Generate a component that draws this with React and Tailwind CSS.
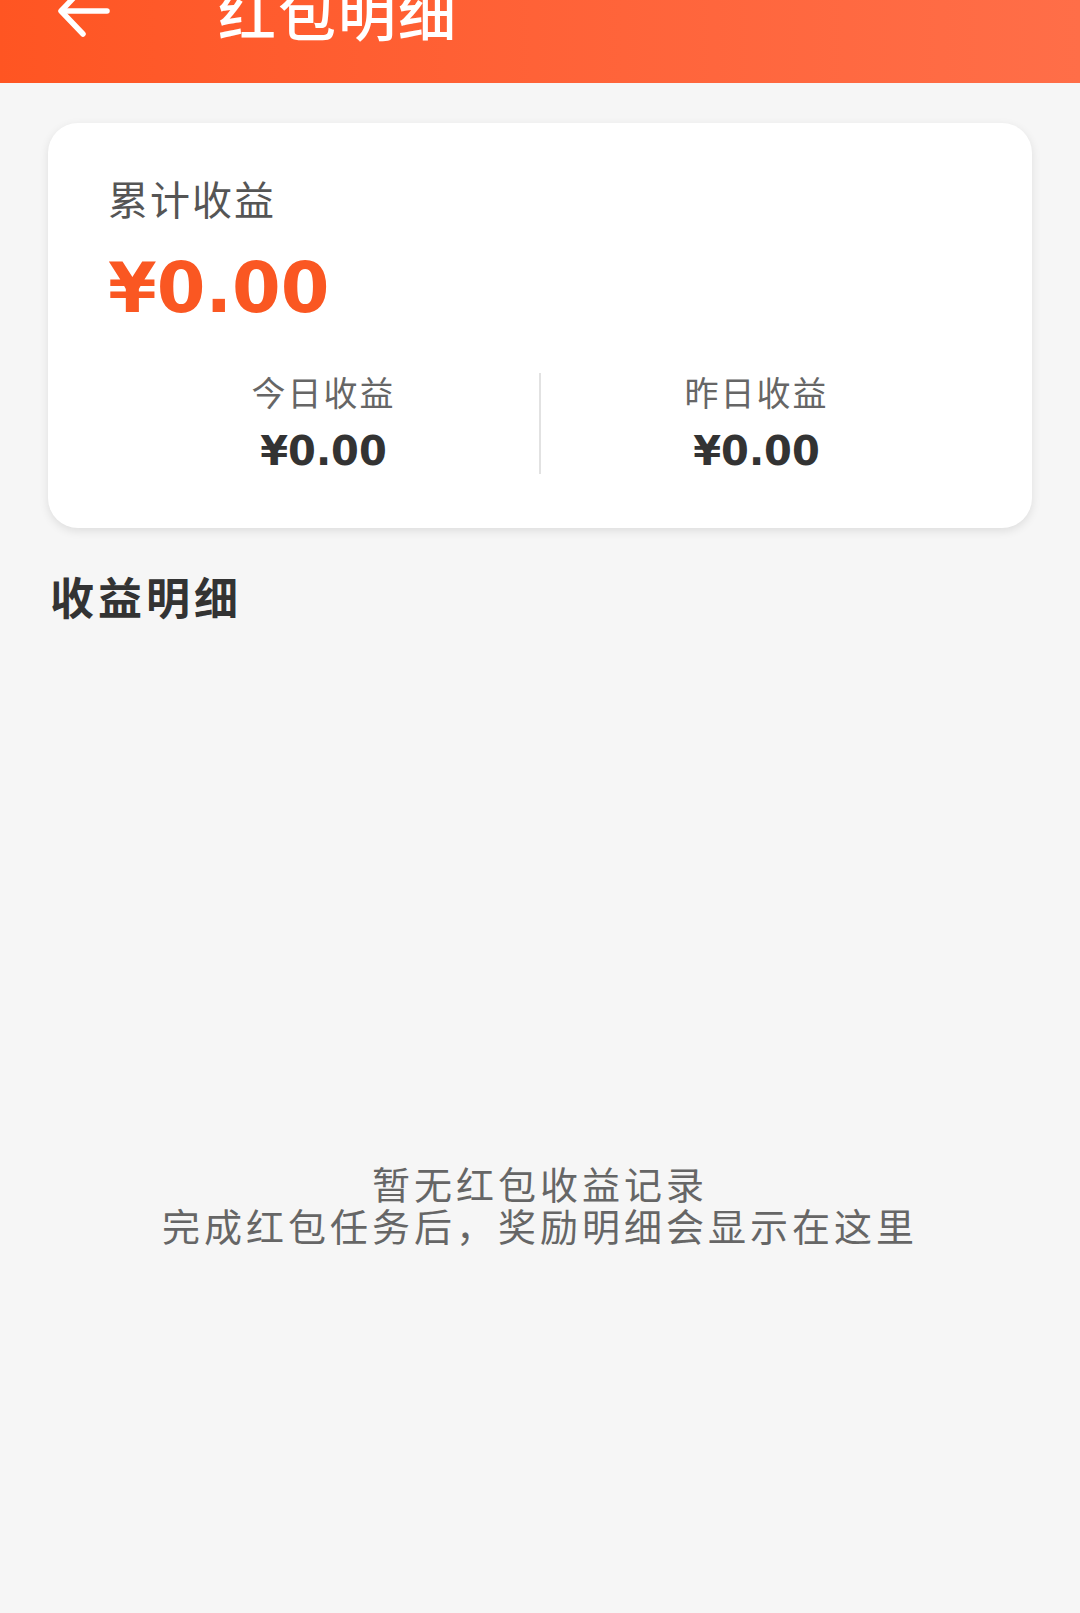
const cjk = { fontFamily: '"Noto Sans CJK SC", "Noto Sans", sans-serif' };
const num = { fontFamily: '"DejaVu Sans", "Liberation Sans", sans-serif' };

const Stat = ({ label, value }) => (
  <div className="flex-1 flex flex-col items-center">
    <div style={cjk} className="text-[34px] leading-[40px] tracking-[2px] text-[#666]">
      {label}
    </div>
    <div style={num} className="mt-[15px] text-[40px] leading-[48px] font-bold text-[#333]">
      {value}
    </div>
  </div>
);

const App = () => {
  return (
    <div className="w-[1080px] min-h-[1613px] bg-[#f6f6f6]">
      {/* header */}
      <div className="h-[83px] overflow-hidden bg-gradient-to-r from-[#ff5522] to-[#ff6e48]">
        <div className="relative -mt-[19px] h-[60px] flex items-center">
          <svg
            className="ml-[56px]"
            width="56"
            height="56"
            viewBox="0 0 56 56"
            fill="none"
            stroke="#fff"
            strokeWidth="5.5"
            strokeLinecap="round"
            strokeLinejoin="round"
          >
            <path d="M27 5 L5 28 L27 51" />
            <path d="M6 28 H51" />
          </svg>
          <div style={cjk} className="ml-[106px] text-[58px] leading-[60px] tracking-[2px] font-medium text-white">
            红包明细
          </div>
        </div>
      </div>

      {/* summary card */}
      <div className="mx-[48px] mt-[40px] rounded-[30px] bg-white shadow-[0_3px_10px_rgba(0,0,0,0.10)] px-[60px] pt-[51px] pb-[53px]">
        <div style={cjk} className="text-[40px] leading-[48px] tracking-[2px] text-[#555]">
          累计收益
        </div>
        <div style={num} className="mt-[26px] text-[70px] leading-[80px] font-bold text-[#fa5722]">
          ¥0.00
        </div>
        <div className="mt-[44px] flex">
          <Stat label="今日收益" value="¥0.00" />
          <div className="w-[2px] bg-[#e2e2e2] my-[1px]" />
          <Stat label="昨日收益" value="¥0.00" />
        </div>
      </div>

      {/* list title */}
      <div style={cjk} className="mt-[40px] ml-[50px] text-[44px] leading-[56px] tracking-[4px] font-bold text-[#333]">
        收益明细
      </div>

      {/* empty state */}
      <div style={cjk} className="mt-[538px] flex flex-col items-center text-[38px] leading-[42px] tracking-[4px] text-[#666]">
        <div>暂无红包收益记录</div>
        <div>完成红包任务后，奖励明细会显示在这里</div>
      </div>
    </div>
  );
};

export default App;
